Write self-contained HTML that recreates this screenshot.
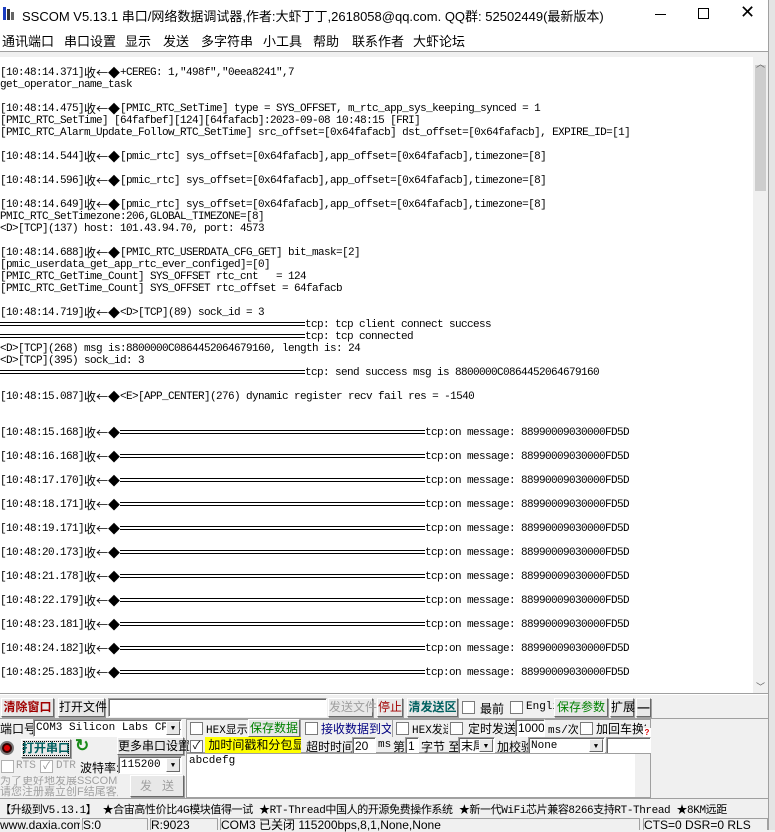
<!DOCTYPE html>
<html><head><meta charset="utf-8">
<style>
*{box-sizing:border-box;margin:0;padding:0}
body{width:775px;height:830px;background:#f0f0f0;font-family:"Liberation Sans","Noto Sans CJK SC",sans-serif;font-size:12px;position:relative;overflow:hidden;color:#000}
.a{position:absolute;white-space:nowrap}
#log{position:absolute;left:0;top:57px;width:753px;height:636px;background:#fff;overflow:hidden;padding-top:10px}
#log pre{font-family:"Liberation Mono","Noto Sans CJK SC",monospace;font-size:11px;letter-spacing:-0.6px;line-height:12px;height:12px;color:#000;white-space:pre}
.k{display:inline-block;width:36px;font-size:12px;letter-spacing:0;font-family:"Noto Sans CJK SC",sans-serif;line-height:12px;vertical-align:top}
.bar{display:inline-block;height:4px;border-top:1px solid #000;border-bottom:1px solid #000;vertical-align:middle}
.btn{position:absolute;background:#e8e8e8;border:1px solid;border-color:#fff #696969 #696969 #fff;box-shadow:1px 1px 0 #a0a0a0;text-align:center;font-size:12px;white-space:nowrap;line-height:17px}
.cb{position:absolute;width:13px;height:13px;background:#fff;border:1px solid #7a7a7a}
.inp{position:absolute;background:#fff;border:1px solid;border-color:#a0a0a0 #fff #fff #a0a0a0;box-shadow:inset 1px 1px 0 #696969;font-size:12px;line-height:16px;padding-left:2px;white-space:nowrap;overflow:hidden}
.dd{position:absolute;right:1px;top:1px;bottom:1px;width:14px;background:#e8e8e8;border:1px solid;border-color:#fff #696969 #696969 #fff;font-size:7px;text-align:center;line-height:14px}
.mono{font-family:"Liberation Mono","Noto Sans CJK SC",monospace}
.m{top:31px;font-size:13px}
</style></head><body>
<div class="a" style="left:0;top:0;width:770px;height:29px;background:#fff"></div>
<div class="a" style="left:3px;top:7px;width:3px;height:13px;background:#1a3cc0"></div>
<div class="a" style="left:7px;top:9px;width:3px;height:11px;background:#333"></div>
<div class="a" style="left:11px;top:12px;width:3px;height:8px;background:#666"></div>
<div class="a" style="left:22px;top:6px;font-size:13px">SSCOM V5.13.1 串口/网络数据调试器,作者:大虾丁丁,2618058@qq.com. QQ群:  52502449(最新版本)</div>
<div class="a" style="left:655px;top:14px;width:11px;height:1px;background:#000"></div>
<div class="a" style="left:698px;top:8px;width:11px;height:11px;border:1px solid #000"></div>
<div class="a" style="left:740px;top:2px;font-size:18px;font-weight:300">✕</div>
<div class="a" style="left:0;top:29px;width:770px;height:23px;background:#fff;border-bottom:1px solid #a0a0a0"></div>
<div class="a m" style="left:2px">通讯端口</div>
<div class="a m" style="left:64px">串口设置</div>
<div class="a m" style="left:125px">显示</div>
<div class="a m" style="left:163px">发送</div>
<div class="a m" style="left:201px">多字符串</div>
<div class="a m" style="left:263px">小工具</div>
<div class="a m" style="left:313px">帮助</div>
<div class="a m" style="left:352px">联系作者</div>
<div class="a m" style="left:413px">大虾论坛</div>
<div class="a" style="left:768px;top:0;width:7px;height:830px;background:#e4e4e4;border-left:1px solid #a0a0a0"></div>
<div id="log">
<pre>[10:48:14.371]<span class="k">收←◆</span>+CEREG: 1,"498f","0eea8241",7</pre>
<pre>get_operator_name_task</pre>
<pre> </pre>
<pre>[10:48:14.475]<span class="k">收←◆</span>[PMIC_RTC_SetTime] type = SYS_OFFSET, m_rtc_app_sys_keeping_synced = 1</pre>
<pre>[PMIC_RTC_SetTime] [64fafbef][124][64fafacb]:2023-09-08 10:48:15 [FRI]</pre>
<pre>[PMIC_RTC_Alarm_Update_Follow_RTC_SetTime] src_offset=[0x64fafacb] dst_offset=[0x64fafacb], EXPIRE_ID=[1]</pre>
<pre> </pre>
<pre>[10:48:14.544]<span class="k">收←◆</span>[pmic_rtc] sys_offset=[0x64fafacb],app_offset=[0x64fafacb],timezone=[8]</pre>
<pre> </pre>
<pre>[10:48:14.596]<span class="k">收←◆</span>[pmic_rtc] sys_offset=[0x64fafacb],app_offset=[0x64fafacb],timezone=[8]</pre>
<pre> </pre>
<pre>[10:48:14.649]<span class="k">收←◆</span>[pmic_rtc] sys_offset=[0x64fafacb],app_offset=[0x64fafacb],timezone=[8]</pre>
<pre>PMIC_RTC_SetTimezone:206,GLOBAL_TIMEZONE=[8]</pre>
<pre>&lt;D&gt;[TCP](137) host: 101.43.94.70, port: 4573</pre>
<pre> </pre>
<pre>[10:48:14.688]<span class="k">收←◆</span>[PMIC_RTC_USERDATA_CFG_GET] bit_mask=[2]</pre>
<pre>[pmic_userdata_get_app_rtc_ever_configed]=[0]</pre>
<pre>[PMIC_RTC_GetTime_Count] SYS_OFFSET rtc_cnt   = 124</pre>
<pre>[PMIC_RTC_GetTime_Count] SYS_OFFSET rtc_offset = 64fafacb</pre>
<pre> </pre>
<pre>[10:48:14.719]<span class="k">收←◆</span>&lt;D&gt;[TCP](89) sock_id = 3</pre>
<pre><span class="bar" style="width:305px"></span>tcp: tcp client connect success</pre>
<pre><span class="bar" style="width:305px"></span>tcp: tcp connected</pre>
<pre>&lt;D&gt;[TCP](268) msg is:8800000C0864452064679160, length is: 24</pre>
<pre>&lt;D&gt;[TCP](395) sock_id: 3</pre>
<pre><span class="bar" style="width:305px"></span>tcp: send success msg is 8800000C0864452064679160</pre>
<pre> </pre>
<pre>[10:48:15.087]<span class="k">收←◆</span>&lt;E&gt;[APP_CENTER](276) dynamic register recv fail res = -1540</pre>
<pre> </pre>
<pre> </pre>
<pre>[10:48:15.168]<span class="k">收←◆</span><span class="bar" style="width:305px"></span>tcp:on message: 88990009030000FD5D</pre>
<pre> </pre>
<pre>[10:48:16.168]<span class="k">收←◆</span><span class="bar" style="width:305px"></span>tcp:on message: 88990009030000FD5D</pre>
<pre> </pre>
<pre>[10:48:17.170]<span class="k">收←◆</span><span class="bar" style="width:305px"></span>tcp:on message: 88990009030000FD5D</pre>
<pre> </pre>
<pre>[10:48:18.171]<span class="k">收←◆</span><span class="bar" style="width:305px"></span>tcp:on message: 88990009030000FD5D</pre>
<pre> </pre>
<pre>[10:48:19.171]<span class="k">收←◆</span><span class="bar" style="width:305px"></span>tcp:on message: 88990009030000FD5D</pre>
<pre> </pre>
<pre>[10:48:20.173]<span class="k">收←◆</span><span class="bar" style="width:305px"></span>tcp:on message: 88990009030000FD5D</pre>
<pre> </pre>
<pre>[10:48:21.178]<span class="k">收←◆</span><span class="bar" style="width:305px"></span>tcp:on message: 88990009030000FD5D</pre>
<pre> </pre>
<pre>[10:48:22.179]<span class="k">收←◆</span><span class="bar" style="width:305px"></span>tcp:on message: 88990009030000FD5D</pre>
<pre> </pre>
<pre>[10:48:23.181]<span class="k">收←◆</span><span class="bar" style="width:305px"></span>tcp:on message: 88990009030000FD5D</pre>
<pre> </pre>
<pre>[10:48:24.182]<span class="k">收←◆</span><span class="bar" style="width:305px"></span>tcp:on message: 88990009030000FD5D</pre>
<pre> </pre>
<pre>[10:48:25.183]<span class="k">收←◆</span><span class="bar" style="width:305px"></span>tcp:on message: 88990009030000FD5D</pre>
</div>
<div class="a" style="left:753px;top:57px;width:15px;height:636px;background:#f0f0f0"></div>
<div class="a" style="left:755px;top:65px;width:11px;height:126px;background:#cdcdcd"></div>
<div class="a" style="left:756px;top:57px;font-size:9px;color:#606060">︿</div>
<div class="a" style="left:756px;top:680px;font-size:9px;color:#606060">﹀</div>
<div class="a" style="left:0;top:693px;width:768px;height:2px;border-top:1px solid #a0a0a0;background:#fff"></div>
<div class="btn" style="left:1px;top:698px;width:53px;height:19px;color:#a00000;font-weight:bold">清除窗口</div>
<div class="btn" style="left:58px;top:698px;width:47px;height:19px">打开文件</div>
<div class="inp" style="left:108px;top:698px;width:219px;height:19px"></div>
<div class="btn" style="left:328px;top:698px;width:45px;height:19px;color:#a0a0a0">发送文件</div>
<div class="btn" style="left:377px;top:698px;width:26px;height:19px;color:#a00000">停止</div>
<div class="btn" style="left:407px;top:698px;width:51px;height:19px;color:#006060;font-weight:bold">清发送区</div>
<div class="cb" style="left:462px;top:701px"></div>
<div class="a" style="left:480px;top:700px">最前</div>
<div class="cb" style="left:510px;top:701px"></div>
<div class="a mono" style="left:526px;top:701px;font-size:11px">Engli</div>
<div class="btn" style="left:554px;top:698px;width:54px;height:19px;color:#008000">保存参数</div>
<div class="btn" style="left:610px;top:698px;width:24px;height:19px">扩展</div>
<div class="btn" style="left:636px;top:698px;width:15px;height:19px;font-weight:bold">—</div>
<div class="a" style="left:0;top:718px;width:768px;height:1px;background:#a0a0a0"></div>
<div class="a" style="left:0;top:720px">端口号</div>
<div class="inp mono" style="left:33px;top:719px;width:149px;height:18px;font-size:11px">COM3 Silicon Labs CP21<div class="dd">▼</div></div>
<div class="a" style="left:0;top:741px;width:14px;height:14px;border-radius:50%;background:#300;border:2px solid #777"></div>
<div class="a" style="left:4px;top:745px;width:6px;height:6px;border-radius:50%;background:#d00"></div>
<div class="btn" style="left:21px;top:739px;width:50px;height:19px;color:#006060;font-weight:bold;outline:1px dotted #000;outline-offset:-3px">打开串口</div>
<div class="a" style="left:75px;top:736px;font-size:17px;color:#1a8a1a;font-weight:bold">↻</div>
<div class="btn" style="left:117px;top:737px;width:67px;height:18px">更多串口设置</div>
<div class="cb" style="left:1px;top:760px;border-color:#b0b0b0"></div>
<div class="a mono" style="left:16px;top:760px;color:#a0a0a0;font-size:11px">RTS</div>
<div class="cb" style="left:40px;top:760px;border-color:#b0b0b0;font-size:10px;line-height:11px;color:#888;text-align:center">✓</div>
<div class="a mono" style="left:56px;top:760px;color:#a0a0a0;font-size:11px">DTR</div>
<div class="a" style="left:80px;top:759px">波特率:</div>
<div class="inp mono" style="left:118px;top:756px;width:64px;height:18px;font-size:11px">115200<div class="dd">▼</div></div>
<div class="a" style="left:0;top:776px;color:#a0a0a0;line-height:11px;font-size:11px;width:118px;overflow:hidden">为了更好地发展SSCOM软件<br>请您注册嘉立创F结尾客户</div>
<div class="btn" style="left:130px;top:775px;width:54px;height:22px;color:#a0a0a0;line-height:20px">发&nbsp;&nbsp;&nbsp;送</div>
<div class="a" style="left:186px;top:719px;width:465px;height:34px;border:1px solid #a0a0a0"></div>
<div class="cb" style="left:190px;top:722px"></div>
<div class="a mono" style="left:206px;top:721px;font-size:11px">HEX显示</div>
<div class="btn" style="left:248px;top:719px;width:52px;height:18px;color:#008000">保存数据</div>
<div class="cb" style="left:305px;top:722px"></div>
<div class="a" style="left:321px;top:720px;color:#000080;width:70px;overflow:hidden">接收数据到文件</div>
<div class="a" style="left:392px;top:719px;width:1px;height:18px;background:#a0a0a0"></div>
<div class="cb" style="left:396px;top:722px"></div>
<div class="a mono" style="left:412px;top:721px;font-size:11px;width:36px;overflow:hidden">HEX发送</div>
<div class="cb" style="left:450px;top:722px"></div>
<div class="a" style="left:468px;top:720px">定时发送</div>
<div class="inp" style="left:515px;top:719px;width:30px;height:18px">1000</div>
<div class="a mono" style="left:548px;top:721px;font-size:11px">ms/次</div>
<div class="cb" style="left:580px;top:722px"></div>
<div class="a" style="left:596px;top:720px;width:50px;overflow:hidden">加回车换行</div>
<div class="a" style="left:643px;top:728px;width:8px;height:9px;background:#fff;color:#d00;font-size:8px;font-weight:bold;line-height:9px;text-align:center">?</div>
<div class="cb" style="left:190px;top:740px;font-size:11px;line-height:11px;text-align:center">✓</div>
<div class="a" style="left:205px;top:737px;width:96px;height:16px;background:#ffff00;overflow:hidden;line-height:16px">&nbsp;加时间戳和分包显示</div>
<div class="a" style="left:306px;top:738px">超时时间</div>
<div class="inp" style="left:352px;top:737px;width:24px;height:17px">20</div>
<div class="a mono" style="left:378px;top:739px;font-size:11px">ms</div>
<div class="a" style="left:393px;top:738px">第</div>
<div class="inp" style="left:405px;top:737px;width:14px;height:17px">1</div>
<div class="a" style="left:421px;top:738px">字节 至</div>
<div class="inp" style="left:458px;top:737px;width:37px;height:17px">末尾<div class="dd">▼</div></div>
<div class="a" style="left:497px;top:738px;width:31px;overflow:hidden">加校验</div>
<div class="inp mono" style="left:528px;top:737px;width:77px;height:17px;font-size:11px">None<div class="dd">▼</div></div>
<div class="inp" style="left:606px;top:737px;width:45px;height:17px"></div>
<div class="a" style="left:186px;top:753px;width:465px;height:45px;background:#fff;border:1px solid #a0a0a0"></div>
<div class="a mono" style="left:189px;top:755px;font-size:11px">abcdefg</div>
<div class="a" style="left:635px;top:754px;width:15px;height:43px;background:#f0f0f0"></div>
<div class="a" style="left:0;top:798px;width:768px;height:1px;background:#a0a0a0"></div>
<div class="a mono" style="left:0;top:801px;font-size:11px;letter-spacing:-0.4px">【升级到V5.13.1】 ★合宙高性价比4G模块值得一试  ★RT-Thread中国人的开源免费操作系统  ★新一代WiFi芯片兼容8266支持RT-Thread  ★8KM远距</div>
<div class="a" style="left:0;top:817px;width:768px;height:13px;background:#f0f0f0"></div>
<div class="a" style="left:0;top:818px;width:80px;height:12px;border-top:1px solid #a0a0a0;overflow:hidden;font-size:12px;line-height:12px">www.daxia.com</div>
<div class="a" style="left:82px;top:818px;width:66px;height:12px;border:1px solid #a0a0a0;border-bottom:0;font-size:12px;line-height:12px">S:0</div>
<div class="a" style="left:150px;top:818px;width:68px;height:12px;border:1px solid #a0a0a0;border-bottom:0;font-size:12px;line-height:12px">R:9023</div>
<div class="a" style="left:220px;top:818px;width:420px;height:12px;border:1px solid #a0a0a0;border-bottom:0;font-size:12px;line-height:12px">COM3 已关闭  115200bps,8,1,None,None</div>
<div class="a" style="left:643px;top:818px;width:125px;height:12px;border:1px solid #a0a0a0;border-bottom:0;font-size:12px;line-height:12px">CTS=0 DSR=0 RLS</div>
</body></html>
